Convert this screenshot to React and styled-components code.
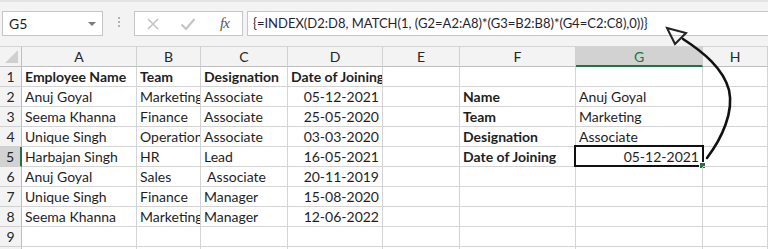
import React from "react";
import styled, { createGlobalStyle } from "styled-components";

const Global = createGlobalStyle`
  html, body { margin: 0; padding: 0; background: #fff; }
  body { font-family: Lato, "Open Sans", sans-serif; color: #1e1e1e; }
  * { box-sizing: border-box; }
`;

const Page = styled.div`
  position: relative;
  width: 768px;
  height: 249px;
  overflow: hidden;
  background: #fff;
`;

const Bar = styled.div`
  display: flex;
  align-items: flex-start;
  height: 47px;
  padding: 11px 0 0 2px;
  background: #f3f3f3;
  border-top: 2px solid #e4e4e4;
  border-bottom: 1px solid #d4d4d4;
`;

const NameBox = styled.div`
  display: flex;
  align-items: center;
  justify-content: space-between;
  width: 101px;
  height: 25px;
  margin-top: -2px;
  padding: 0 6px 0 6px;
  background: #fff;
  border: 1px solid #c6c6c6;
  font-size: 14px;
`;

const Caret = styled.span`
  width: 0;
  height: 0;
  border-left: 4px solid transparent;
  border-right: 4px solid transparent;
  border-top: 4px solid #7a7a7a;
`;

const Dots = styled.div`
  display: flex;
  flex-direction: column;
  gap: 2px;
  width: 31px;
  align-items: center;
  padding-top: 6px;
  margin-top: -2px;
  span { width: 2px; height: 2px; background: #b3b3b3; }
`;

const Buttons = styled.div`
  display: flex;
  align-items: center;
  width: 109px;
  height: 25px;
  margin-top: -2px;
  padding-left: 11px;
  background: #fff;
  border: 1px solid #c6c6c6;
  gap: 20px;
`;

const Fx = styled.span`
  font-family: "Liberation Serif", serif;
  font-style: italic;
  font-size: 15px;
  color: #555;
  margin-left: 4px;
  letter-spacing: -1px;
`;

const FormulaBox = styled.div`
  flex: 1;
  height: 25px;
  margin-top: -2px;
  margin-left: 4px;
  margin-right: -4px;
  padding-left: 5px;
  background: #fff;
  border: 1px solid #c6c6c6;
  font-size: 13px;
  line-height: 23px;
  white-space: nowrap;
  color: #1f2430;
`;

const Grid = styled.div`
  display: grid;
  grid-template-columns: 22px 115px 64px 87px 95px 77px 116px 127px 65px;
  grid-auto-rows: 20px;
`;

const ColHead = styled.div`
  display: flex;
  align-items: center;
  justify-content: center;
  background: ${(p) => (p.$active ? "#d2d2d2" : "#f3f3f3")};
  border-right: 1px solid #d0d0d0;
  border-bottom: ${(p) => (p.$active ? "2px solid #217346" : "1px solid #bfbfbf")};
  color: ${(p) => (p.$active ? "#217346" : "#262626")};
  font-size: 14px;
  padding-top: ${(p) => (p.$active ? "1px" : "0")};
`;

const Corner = styled.div`
  position: relative;
  background: #f3f3f3;
  border-right: 1px solid #bfbfbf;
  border-bottom: 1px solid #bfbfbf;
  &::after {
    content: "";
    position: absolute;
    right: 3px;
    bottom: 3px;
    border-left: 13px solid transparent;
    border-bottom: 13px solid #cfcfcf;
  }
`;

const RowHead = styled.div`
  display: flex;
  align-items: center;
  justify-content: center;
  background: ${(p) => (p.$active ? "#d2d2d2" : "#f3f3f3")};
  border-right: ${(p) => (p.$active ? "2px solid #217346" : "1px solid #bfbfbf")};
  border-bottom: 1px solid #d0d0d0;
  font-size: 14px;
  color: #262626;
`;

const Cell = styled.div`
  position: relative;
  padding: 0 3px 0 3px;
  border-right: 1px solid #d4d4d4;
  border-bottom: 1px solid #d4d4d4;
  font-size: 14px;
  line-height: 20px;
  white-space: ${(p) => (p.$pre ? "pre" : "nowrap")};
  overflow: ${(p) => (p.$selected ? "visible" : "hidden")};
  text-align: ${(p) => p.$align || "left"};
  font-weight: ${(p) => (p.$bold ? 700 : 400)};
`;

const Selection = styled.div`
  position: absolute;
  left: -2px;
  top: -2px;
  right: -2px;
  bottom: -1px;
  border: 2px solid #111;
  pointer-events: none;
  &::after {
    content: "";
    position: absolute;
    right: -4px;
    bottom: -4px;
    width: 5px;
    height: 5px;
    background: #217346;
    border: 1px solid #fff;
  }
`;

const Overlay = styled.svg`
  position: absolute;
  left: 0;
  top: 0;
  pointer-events: none;
`;

const cols = ["A", "B", "C", "D", "E", "F", "G", "H"];

const rows = [
  [{ t: "Employee Name", b: 1 }, { t: "Team", b: 1 }, { t: "Designation", b: 1 }, { t: "Date of Joining", b: 1 }, {}, {}, {}, {}],
  [{ t: "Anuj Goyal" }, { t: "Marketing" }, { t: "Associate" }, { t: "05-12-2021", r: 1 }, {}, { t: "Name", b: 1 }, { t: "Anuj Goyal" }, {}],
  [{ t: "Seema Khanna" }, { t: "Finance" }, { t: "Associate" }, { t: "25-05-2020", r: 1 }, {}, { t: "Team", b: 1 }, { t: "Marketing" }, {}],
  [{ t: "Unique Singh" }, { t: "Operations" }, { t: "Associate" }, { t: "03-03-2020", r: 1 }, {}, { t: "Designation", b: 1 }, { t: "Associate" }, {}],
  [{ t: "Harbajan Singh" }, { t: "HR" }, { t: "Lead" }, { t: "16-05-2021", r: 1 }, {}, { t: "Date of Joining", b: 1 }, { t: "05-12-2021", r: 1, sel: 1 }, {}],
  [{ t: "Anuj Goyal" }, { t: "Sales" }, { t: " Associate", pre: 1 }, { t: "20-11-2019", r: 1 }, {}, {}, {}, {}],
  [{ t: "Unique Singh" }, { t: "Finance" }, { t: "Manager" }, { t: "15-08-2020", r: 1 }, {}, {}, {}, {}],
  [{ t: "Seema Khanna" }, { t: "Marketing" }, { t: "Manager" }, { t: "12-06-2022", r: 1 }, {}, {}, {}, {}],
  [{}, {}, {}, {}, {}, {}, {}, {}],
  [{}, {}, {}, {}, {}, {}, {}, {}],
];

export default function App() {
  return (
    <Page>
      <Global />
      <Bar>
        <NameBox>
          <span>G5</span>
          <Caret />
        </NameBox>
        <Dots>
          <span />
          <span />
          <span />
        </Dots>
        <Buttons>
          <svg width="14" height="14" viewBox="0 0 14 14">
            <path d="M2 2 L12 12 M12 2 L2 12" stroke="#c4c4c4" strokeWidth="1.6" fill="none" />
          </svg>
          <svg width="16" height="14" viewBox="0 0 16 14">
            <path d="M1.5 7.5 L6 12 L14.5 2" stroke="#c4c4c4" strokeWidth="2" fill="none" />
          </svg>
          <Fx>fx</Fx>
        </Buttons>
        <FormulaBox>{"{=INDEX(D2:D8, MATCH(1, (G2=A2:A8)*(G3=B2:B8)*(G4=C2:C8),0))}"}</FormulaBox>
      </Bar>
      <Grid>
        <Corner />
        {cols.map((c) => (
          <ColHead key={c} $active={c === "G"}>
            {c}
          </ColHead>
        ))}
        {rows.map((r, i) => (
          <React.Fragment key={i}>
            <RowHead $active={i === 4}>{i + 1}</RowHead>
            {r.map((c, j) => (
              <Cell key={j} $bold={c.b} $align={c.r ? "right" : "left"} $pre={c.pre} $selected={c.sel}>
                {c.t}
                {c.sel && <Selection />}
              </Cell>
            ))}
          </React.Fragment>
        ))}
      </Grid>
      <Overlay width="768" height="249" viewBox="0 0 768 249">
        <path
          d="M707 158 C 722 138, 734 112, 729 90 C 723 68, 703 52, 683 39"
          stroke="#111"
          strokeWidth="2.6"
          fill="none"
          strokeLinecap="round"
        />
        <polygon points="667,28 686,33 675,44" fill="none" stroke="#222" strokeWidth="2" strokeLinejoin="miter" />
      </Overlay>
    </Page>
  );
}
